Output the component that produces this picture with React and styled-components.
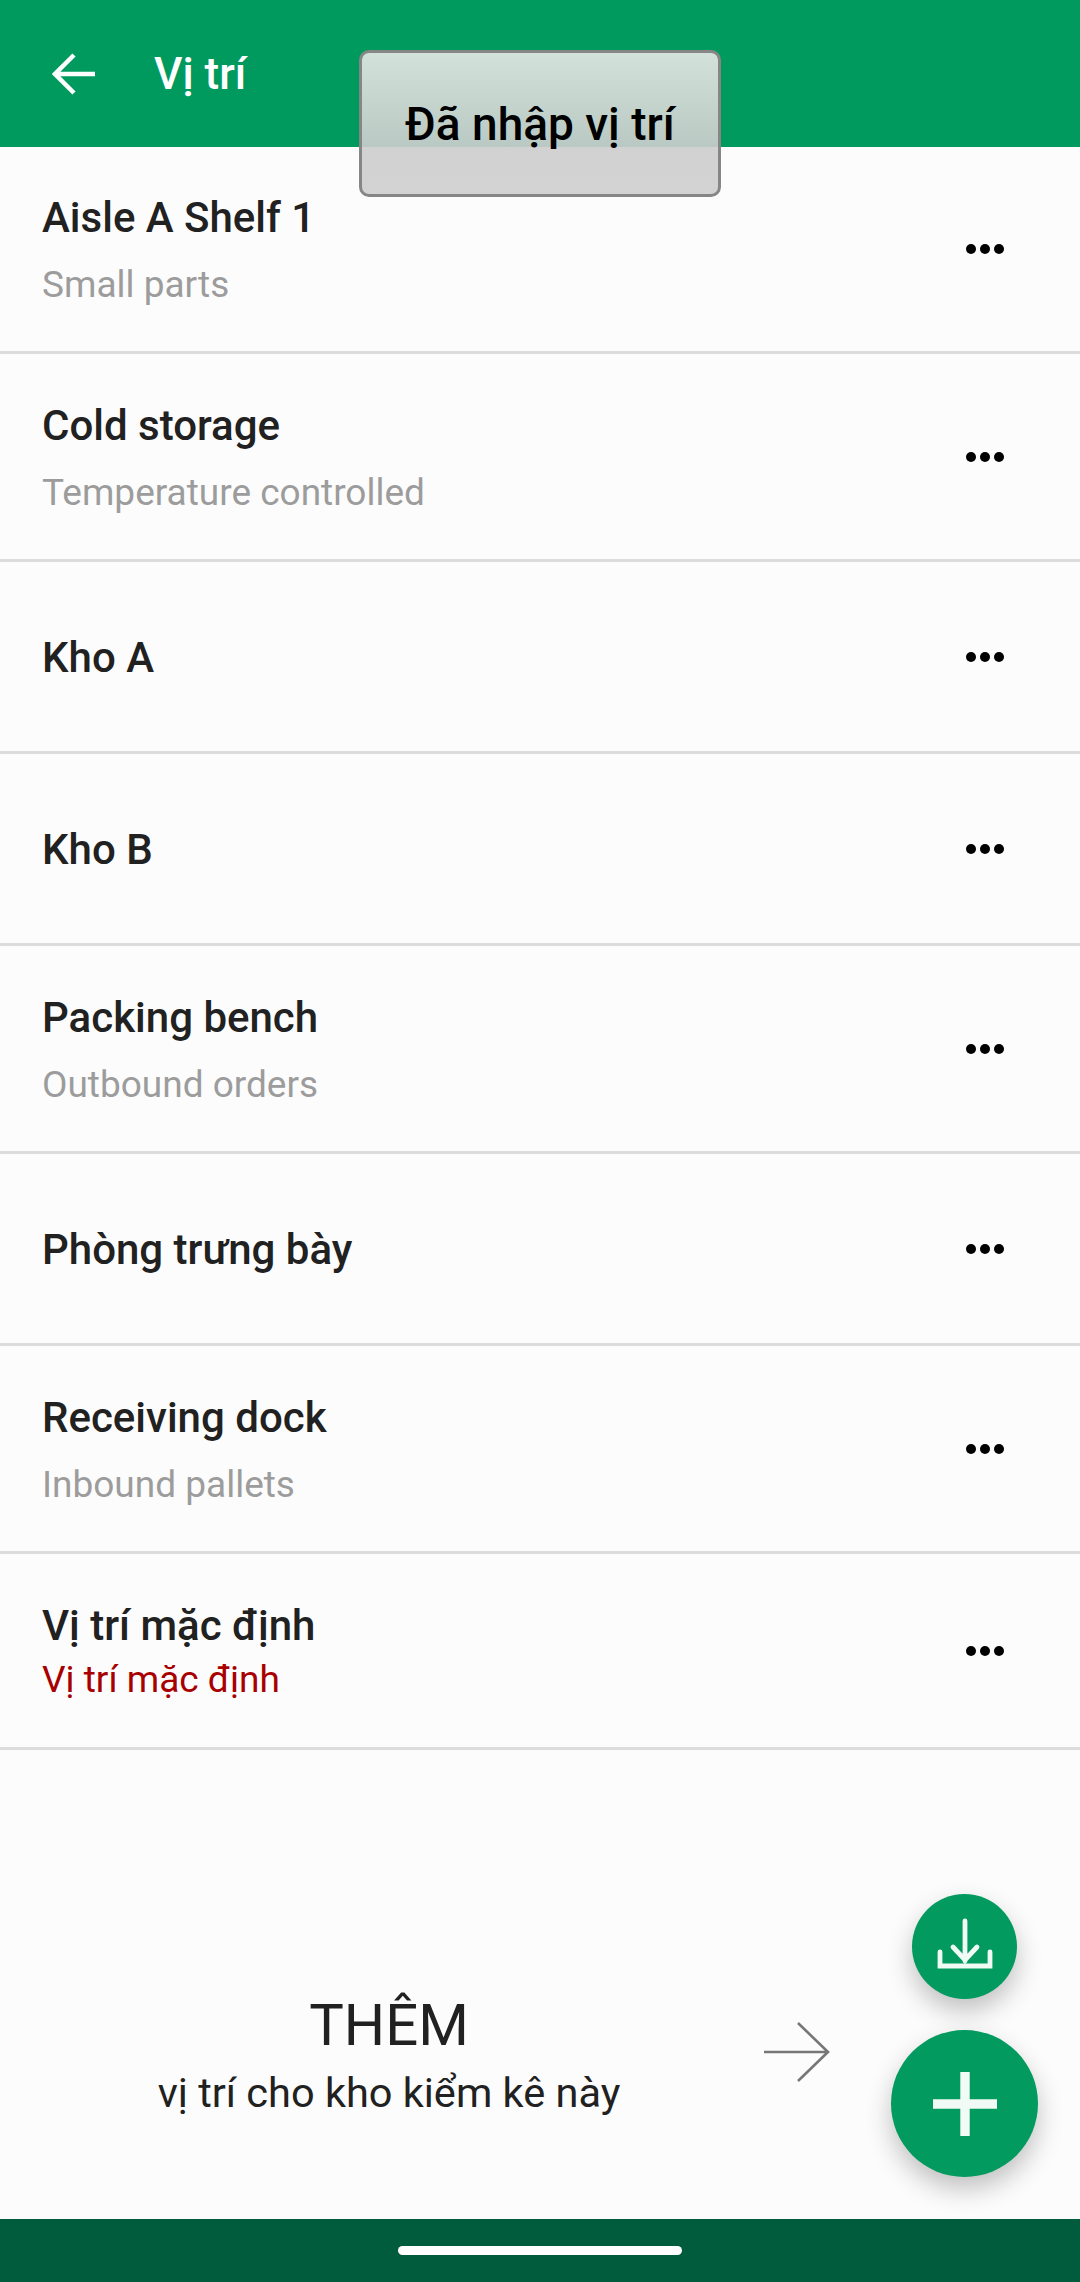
import React from "react";
import styled, { createGlobalStyle } from "styled-components";

const Global = createGlobalStyle`
  html, body { margin: 0; padding: 0; background: #fcfcfc; }
  * { box-sizing: border-box; }
`;

const Screen = styled.div`
  position: relative;
  width: 1080px;
  height: 2282px;
  display: flex;
  flex-direction: column;
  overflow: hidden;
  background: #fcfcfc;
  font-family: Roboto, "Noto Sans", sans-serif;
`;

const Header = styled.header`
  height: 147px;
  flex: none;
  background: #009a5f;
  display: flex;
  align-items: flex-start;
  padding: 52px 0 0 52px;
  gap: 58px;
`;

const BackIcon = styled.svg`
  width: 44px;
  height: 44px;
  flex: none;
  fill: none;
  stroke: #fff;
  stroke-width: 4.5;
`;

const HeaderTitle = styled.h1`
  margin: 0;
  color: #fff;
  font-size: 44px;
  line-height: 44px;
  font-weight: 500;
`;

const Toast = styled.div`
  position: absolute;
  left: 359px;
  top: 50px;
  width: 362px;
  height: 147px;
  border: 3px solid #868686;
  border-radius: 10px;
  background: linear-gradient(rgba(228, 232, 228, 0.92), rgba(205, 205, 205, 0.9) 68%, rgba(207, 207, 207, 0.92));
  display: flex;
  align-items: center;
  justify-content: center;
  color: #000;
  font-size: 46px;
  font-weight: 500;
  padding-bottom: 0;
`;

const List = styled.main`
  display: flex;
  flex-direction: column;
`;

const Row = styled.div`
  height: ${(p) => p.$h}px;
  flex: none;
  display: flex;
  align-items: center;
  justify-content: space-between;
  padding: 0 76px 0 42px;
  border-bottom: 3px solid #dcdcdc;
`;

const RowText = styled.div`
  display: flex;
  flex-direction: column;
  padding-top: 3px;
  gap: ${(p) => p.$gap}px;
`;

const RowTitle = styled.div`
  color: #212121;
  font-size: 42px;
  line-height: 46px;
  font-weight: 500;
`;

const RowSub = styled.div`
  color: ${(p) => (p.$red ? "#a80000" : "#9c9c9c")};
  font-size: 37px;
  line-height: 42px;
`;

const Dots = styled.svg`
  width: 38px;
  height: 10px;
  flex: none;
  fill: #000;
`;

const Footer = styled.section`
  flex: 1;
  display: flex;
  flex-direction: column;
  align-items: center;
  justify-content: flex-end;
  width: 778px;
  padding-bottom: 101px;
`;

const PromoTitle = styled.div`
  color: #212121;
  font-size: 58px;
  line-height: 66px;
  font-weight: 400;
`;

const PromoText = styled.div`
  color: #212121;
  font-size: 41.5px;
  line-height: 50px;
  font-weight: 400;
  margin-top: 10px;
`;

const HintArrow = styled.svg`
  position: absolute;
  left: 762px;
  top: 2020px;
  width: 70px;
  height: 64px;
  fill: none;
  stroke: #777;
  stroke-width: 2.6;
`;

const Fab = styled.div`
  position: absolute;
  left: ${(p) => p.$x}px;
  top: ${(p) => p.$y}px;
  width: ${(p) => p.$size}px;
  height: ${(p) => p.$size}px;
  border-radius: 50%;
  background: #029a5f;
  box-shadow: 0 12px 26px rgba(0, 0, 0, 0.24);
  display: flex;
  align-items: center;
  justify-content: center;
`;

const FabIcon = styled.svg`
  width: ${(p) => p.$size}px;
  height: ${(p) => p.$size}px;
  fill: none;
  stroke: #f1fbf6;
`;

const NavBar = styled.footer`
  height: 63px;
  flex: none;
  background: #005c3c;
  display: flex;
  align-items: center;
  justify-content: center;
`;

const HomeIndicator = styled.div`
  width: 284px;
  height: 9px;
  border-radius: 5px;
  background: #fff;
`;

const rows = [
  { title: "Aisle A Shelf 1", sub: "Small parts", h: 207 },
  { title: "Cold storage", sub: "Temperature controlled", h: 208 },
  { title: "Kho A", h: 192 },
  { title: "Kho B", h: 192 },
  { title: "Packing bench", sub: "Outbound orders", h: 208 },
  { title: "Phòng trưng bày", h: 192 },
  { title: "Receiving dock", sub: "Inbound pallets", h: 208 },
  { title: "Vị trí mặc định", sub: "Vị trí mặc định", h: 196, red: true },
];

export default function App() {
  return (
    <Screen>
      <Global />
      <Header>
        <BackIcon viewBox="0 0 44 44">
          <path d="M43 22H3M22 3 3 22l19 19" />
        </BackIcon>
        <HeaderTitle>Vị trí</HeaderTitle>
      </Header>
      <List>
        {rows.map((r) => (
          <Row key={r.title} $h={r.h}>
            <RowText $gap={r.red ? 10 : r.sub ? 23 : 0}>
              <RowTitle>{r.title}</RowTitle>
              {r.sub && <RowSub $red={r.red}>{r.sub}</RowSub>}
            </RowText>
            <Dots viewBox="0 0 38 10">
              <circle cx="5" cy="5" r="5" />
              <circle cx="19" cy="5" r="5" />
              <circle cx="33" cy="5" r="5" />
            </Dots>
          </Row>
        ))}
      </List>
      <Footer>
        <PromoTitle>THÊM</PromoTitle>
        <PromoText>vị trí cho kho kiểm kê này</PromoText>
      </Footer>
      <NavBar>
        <HomeIndicator />
      </NavBar>
      <Toast>Đã nhập vị trí</Toast>
      <HintArrow viewBox="0 0 70 64">
        <path d="M2 32H66M36 3l30 29-30 29" />
      </HintArrow>
      <Fab $x={912} $y={1894} $size={105}>
        <FabIcon $size={64} viewBox="0 0 64 64" strokeWidth="4.8" strokeLinecap="round">
          <path d="M32 6v40M20 32l12 13 12-13M7 37v14h50V37" />
        </FabIcon>
      </Fab>
      <Fab $x={891} $y={2030} $size={147}>
        <FabIcon $size={64} viewBox="0 0 64 64" strokeWidth="9.4">
          <path d="M32 0v64M0 32h64" />
        </FabIcon>
      </Fab>
    </Screen>
  );
}
